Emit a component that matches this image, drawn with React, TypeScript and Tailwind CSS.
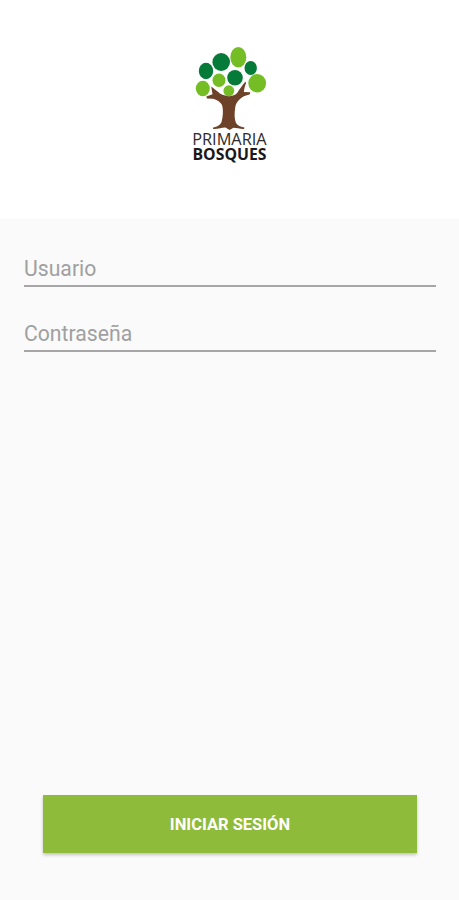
import { useState } from "react";

interface Leaf {
  cx: number;
  cy: number;
  rx: number;
  ry: number;
  dark?: boolean;
}

const leaves: Leaf[] = [
  { cx: 58.3, cy: 22.3, rx: 8, ry: 10.2 },
  { cx: 41.2, cy: 27, rx: 8.8, ry: 9, dark: true },
  { cx: 26, cy: 36, rx: 7.2, ry: 8.2, dark: true },
  { cx: 70.7, cy: 33, rx: 6.2, ry: 7, dark: true },
  { cx: 39, cy: 45.2, rx: 6.5, ry: 6.7 },
  { cx: 55, cy: 42.7, rx: 7.8, ry: 7.7, dark: true },
  { cx: 77.2, cy: 48.2, rx: 8.9, ry: 9.2 },
  { cx: 22.8, cy: 53.5, rx: 7, ry: 7.8 },
  { cx: 48.8, cy: 55.8, rx: 5.4, ry: 5.5 },
];

function Logo() {
  return (
    <svg width="100" height="130" viewBox="0 0 100 130" role="img">
      <path
        fill="#6e4228"
        d="M31.2 51.5L38.5 57.2C40.5 59.8 44 60.2 48.5 61.2C52.5 61 55.5 60.2 57.5 57.5C59.5 54.5 61.5 51.5 65.5 46.6L66 48.2C64.7 51.2 64.2 54.5 63.8 57L70.2 57.2L70 59.2L63.8 61.2C59.8 63.5 56 67 55.2 72.5C54.3 79 54.3 84 56 88C58 91 61.5 92 64.5 92.6L64 94C60.5 94.3 56.5 92.8 53.5 92.8L49.5 95L45.5 92.6C42 92.4 38 94.4 33 94L33.2 92.6C37.5 91.8 40.5 90 41.5 87C43 82 43.4 75 42.2 70.7C41 67 37 65 33 63.8L27 63.4L26.3 61.6L32.5 59.2Z"
      />
      {leaves.map((leaf) => (
        <ellipse
          key={`${leaf.cx}-${leaf.cy}`}
          cx={leaf.cx}
          cy={leaf.cy}
          rx={leaf.rx}
          ry={leaf.ry}
          fill={leaf.dark ? "#067a38" : "#74bd24"}
        />
      ))}
      <text
        x="12.2"
        y="110"
        textLength="74.5"
        lengthAdjust="spacingAndGlyphs"
        className="fill-[#30292a] font-['Open_Sans',sans-serif] text-[16.5px]"
      >
        PRIMARIA
      </text>
      <text
        x="12.5"
        y="124.6"
        textLength="74"
        lengthAdjust="spacingAndGlyphs"
        className="fill-[#1c1819] font-['Open_Sans',sans-serif] text-[15.8px] font-bold"
      >
        BOSQUES
      </text>
    </svg>
  );
}

interface FieldProps {
  label: string;
  type?: string;
  value: string;
  onChange: (value: string) => void;
}

function Field({ label, type = "text", value, onChange }: FieldProps) {
  return (
    <input
      type={type}
      value={value}
      placeholder={label}
      aria-label={label}
      onChange={(e) => onChange(e.target.value)}
      className="block h-[38px] w-full border-b-2 border-[#a6a6a6] bg-transparent pt-[3px] text-[21.2px] text-[#333333] outline-none placeholder:text-[#a0a0a0]"
    />
  );
}

export default function App() {
  const [user, setUser] = useState("");
  const [password, setPassword] = useState("");

  return (
    <div className="flex h-screen w-full flex-col bg-[#fafafa] font-[Roboto,sans-serif]">
      <header className="flex h-[219px] shrink-0 justify-center bg-white pt-[35px]">
        <Logo />
      </header>

      <form
        className="flex flex-1 flex-col"
        onSubmit={(e) => e.preventDefault()}
      >
        <div className="flex flex-col gap-[27px] pt-[30px] pr-[23px] pl-6">
          <Field label="Usuario" value={user} onChange={setUser} />
          <Field
            label="Contraseña"
            type="password"
            value={password}
            onChange={setPassword}
          />
        </div>

        <button
          type="submit"
          className="mr-[42px] mb-[47px] ml-[43px] mt-auto h-[58px] bg-[#8ebc3a] pt-0.5 text-[16.5px] font-bold text-white shadow-[0_2px_3px_rgba(0,0,0,0.22)]"
        >
          INICIAR SESIÓN
        </button>
      </form>
    </div>
  );
}
